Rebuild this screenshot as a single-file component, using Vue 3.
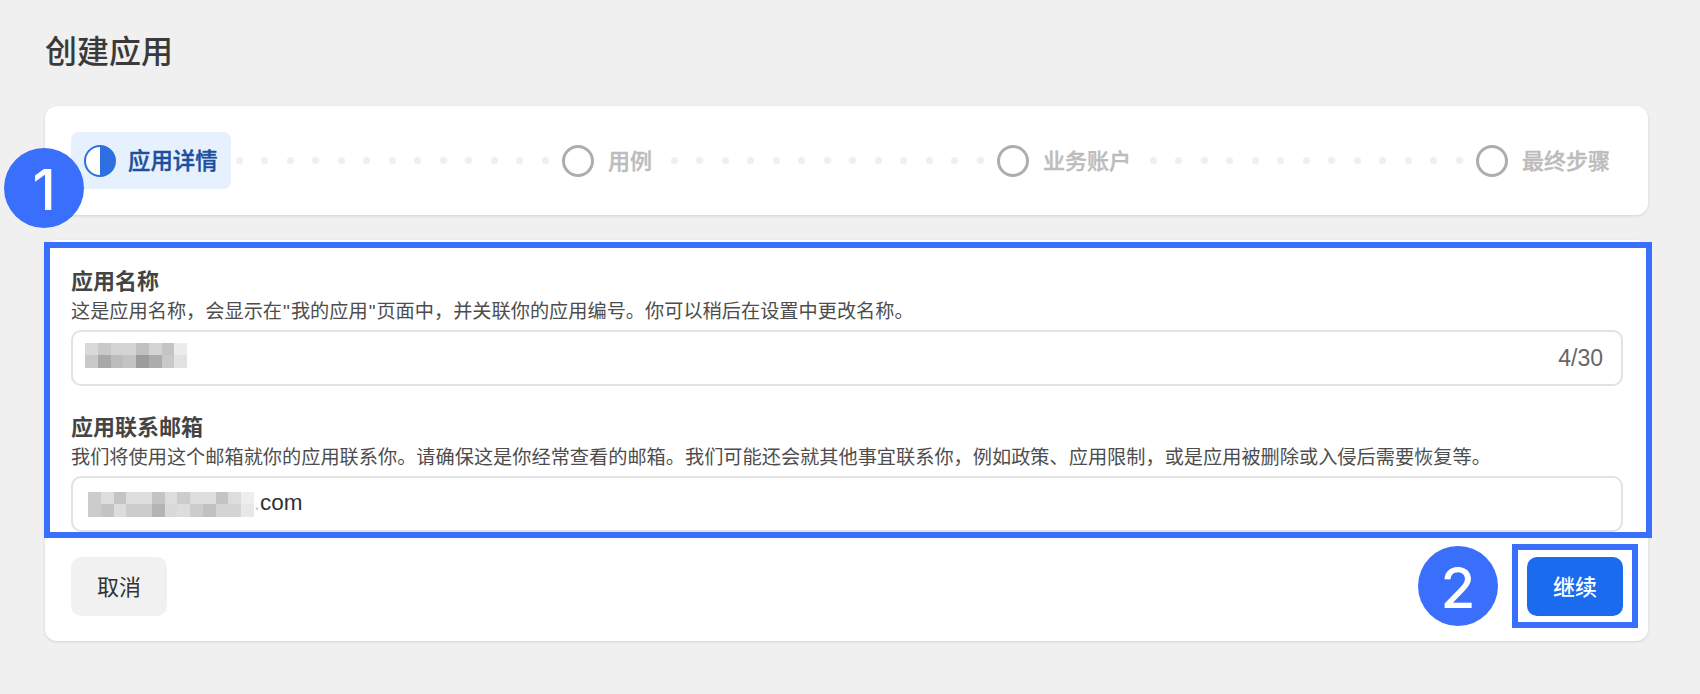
<script setup>
const dots = Array.from({ length: 13 }, (_, i) => i)
const steps = [
  { label: '用例' },
  { label: '业务账户' },
  { label: '最终步骤' }
]
const nameBlur = ['d9','c9','d4','d4','c0','d4','c4','ec','c9','a8','bc','c4','9c','ac','c9','e2']
const mailBlur = ['cc','dd','c4','dd','dd','c4','dd','cc','dd','dd','c4','dd','ee','cc','c4','dd','cc','cc','b4','d9','dd','cc','c0','d4','d4','e8']
const grey = (v) => `#${v}${v}${v}`
</script>

<template>
  <div class="page">
    <h1 class="title">创建应用</h1>

    <section class="card stepper">
      <div class="pill">
        <svg class="step-icon" viewBox="0 0 32 32">
          <circle cx="16" cy="16" r="15" fill="#fff" stroke="#2d6fe0" stroke-width="2" />
          <path d="M16 1a15 15 0 0 1 0 30z" fill="#2d6fe0" />
        </svg>
        <span class="pill-text">应用详情</span>
      </div>
      <template v-for="(s, i) in steps" :key="s.label">
        <div class="dots" :class="{ first: i === 0 }">
          <i v-for="d in dots" :key="d" class="dot"></i>
        </div>
        <div class="step">
          <svg class="step-icon" viewBox="0 0 32 32">
            <circle cx="16" cy="16" r="14.5" fill="none" stroke="#adadb0" stroke-width="3" />
          </svg>
          <span class="step-text">{{ s.label }}</span>
        </div>
      </template>
    </section>

    <section class="card form">
      <div class="field">
        <div class="label">应用名称</div>
        <div class="desc">这是应用名称，会显示在<span class="q">"</span>我的应用<span class="q">"</span>页面中，并关联你的应用编号。你可以稍后在设置中更改名称。</div>
        <div class="input">
          <div class="blur name-blur">
            <i v-for="(c, i) in nameBlur" :key="i" :style="{ background: grey(c) }"></i>
          </div>
          <span class="count">4/30</span>
        </div>
      </div>
      <div class="field second">
        <div class="label">应用联系邮箱</div>
        <div class="desc">我们将使用这个邮箱就你的应用联系你。请确保这是你经常查看的邮箱。我们可能还会就其他事宜联系你，例如政策、应用限制，或是应用被删除或入侵后需要恢复等。</div>
        <div class="input mail">
          <div class="blur mail-blur">
            <i v-for="(c, i) in mailBlur" :key="i" :style="{ background: grey(c) }"></i>
          </div>
          <span class="value"><span class="faint">.</span>com</span>
        </div>
      </div>
      <div class="actions">
        <button class="btn cancel"><span class="btn-text">取消</span></button>
        <button class="btn next"><span class="btn-text">继续</span></button>
      </div>
    </section>

    <div class="mark mark-form"></div>
    <div class="mark mark-btn"></div>
    <div class="badge badge-1">1</div>
    <div class="badge badge-2">2</div>
  </div>
</template>

<style scoped>
.page {
  position: relative;
  width: 1700px;
  height: 694px;
  box-sizing: border-box;
  padding: 0 52px 0 45px;
  background: #f0f0f0;
  overflow: hidden;
  font-family: "Liberation Sans", "Noto Sans CJK SC", sans-serif;
  color: #333;
}
.title {
  height: 106px;
  margin: 0;
  padding-top: 31px;
  box-sizing: border-box;
  font-size: 32px;
  line-height: 42px;
  font-weight: 500;
  color: #3a3a3a;
}
.card {
  background: #fff;
  border-radius: 12px;
  box-shadow: 0 1px 3px rgba(0, 0, 0, 0.12);
}
.stepper {
  display: flex;
  align-items: center;
  height: 109px;
  box-sizing: border-box;
  padding: 26px 38px 26px 26px;
}
.pill {
  display: flex;
  align-items: center;
  gap: 12px;
  width: 160px;
  height: 57px;
  box-sizing: border-box;
  padding-left: 13px;
  border-radius: 8px;
  background: #e6f1fd;
}
.pill-text {
  padding-bottom: 4px;
  font-size: 22.4px;
  font-weight: 500;
  -webkit-text-stroke: 0.4px #1c4f9f;
  color: #1c4f9f;
  white-space: nowrap;
}
.step-icon {
  flex: none;
  width: 32px;
  height: 32px;
}
.dots {
  flex: 1;
  display: flex;
  justify-content: space-between;
  margin: 0 13px 0 19px;
}
.dots.first {
  margin-left: 5px;
}
.dot {
  width: 7px;
  height: 7px;
  border-radius: 50%;
  background: #efefef;
}
.step {
  display: flex;
  align-items: center;
  gap: 14px;
}
.step-text {
  padding-bottom: 4px;
  font-size: 22px;
  font-weight: 500;
  -webkit-text-stroke: 0.4px #bcbcbc;
  color: #bcbcbc;
  white-space: nowrap;
}
.form {
  margin-top: 25px;
  height: 401px;
  box-sizing: border-box;
  padding: 28px 25px 25px 26px;
}
.field.second {
  margin-top: 28px;
}
.label {
  font-size: 22px;
  line-height: 28px;
  font-weight: 700;
  color: #444;
}
.desc {
  margin: 3px 0 5px;
  font-size: 19.2px;
  line-height: 26px;
  color: #4d4d4d;
  white-space: nowrap;
}
.q {
  margin: 0 1px;
}
.input {
  display: flex;
  align-items: center;
  justify-content: space-between;
  height: 56px;
  box-sizing: border-box;
  padding: 0 18px 0 12px;
  border: 2px solid #e2e2e2;
  border-radius: 10px;
  background: #fff;
}
.input.mail {
  justify-content: flex-start;
  padding-left: 15px;
}
.blur {
  display: grid;
  grid-auto-rows: 12.5px;
}
.name-blur {
  grid-template-columns: repeat(8, 12.75px);
  margin-bottom: 6px;
}
.mail-blur {
  grid-template-columns: repeat(13, 12.75px);
}
.count {
  font-size: 23px;
  color: #666;
}
.value {
  padding-bottom: 2px;
  font-size: 22.5px;
  color: #333;
}
.faint {
  color: #ccc;
}
.actions {
  display: flex;
  justify-content: space-between;
  margin-top: 25px;
}
.btn {
  width: 96px;
  height: 59px;
  padding: 0;
  border: 0;
  border-radius: 10px;
  font-family: inherit;
  font-size: 22px;
}
.btn-text {
  display: block;
  padding-bottom: 4px;
}
.cancel {
  background: #f1f1f1;
  color: #333;
}
.next {
  background: #1a6bed;
  color: #fff;
  font-weight: 500;
}
.mark {
  position: absolute;
  box-sizing: border-box;
  border: 6px solid #3a6ffb;
}
.mark-form {
  left: 44px;
  top: 242px;
  width: 1608px;
  height: 296px;
}
.mark-btn {
  left: 1512px;
  top: 544px;
  width: 126px;
  height: 84px;
}
.badge {
  position: absolute;
  display: flex;
  align-items: center;
  justify-content: center;
  width: 80px;
  height: 80px;
  box-sizing: border-box;
  padding-top: 3px;
  border-radius: 50%;
  background: #3a6ffb;
  color: #fff;
  font-family: Inter, sans-serif;
  font-size: 56px;
  font-weight: 500;
}
.badge-1 {
  left: 4px;
  top: 148px;
}
.badge-2 {
  left: 1418px;
  top: 546px;
}
</style>
